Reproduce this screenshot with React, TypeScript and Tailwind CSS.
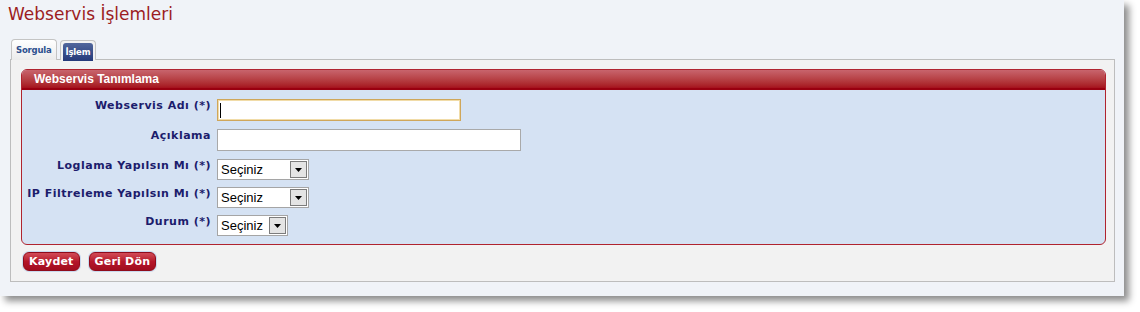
import React from 'react';

const fields = [
  { label: 'Webservis Adı (*)', kind: 'focus', width: 'w-[244px]', height: 'h-[22px]', mb: 'mb-[8px]' },
  { label: 'Açıklama', kind: 'text', width: 'w-[304px]', height: 'h-[22px]', mb: 'mb-[8px]' },
  { label: 'Loglama Yapılsın Mı (*)', kind: 'select', width: 'w-[92px]', height: 'h-[21px]', mb: 'mb-[7px]' },
  { label: 'IP Filtreleme Yapılsın Mı (*)', kind: 'select', width: 'w-[92px]', height: 'h-[21px]', mb: 'mb-[7px]' },
  { label: 'Durum (*)', kind: 'select', width: 'w-[71px]', height: 'h-[21px]', mb: '' },
];

function Select({ width }: { width: string }) {
  return (
    <div className={`${width} h-[21px] flex border border-[#a5a5a5] bg-white`}>
      <span className="flex-1 pl-[3px] text-[13px] leading-[19px] text-black font-['Liberation_Sans',Arial,sans-serif]">
        Seçiniz
      </span>
      <span className="w-[17px] h-[17px] m-[1px] flex items-center justify-center bg-[#e4e4e4] border border-[#7c7c7c]">
        <svg width="8" height="4" viewBox="0 0 8 4">
          <path d="M0 0 H7 L3.5 4 Z" fill="#000" />
        </svg>
      </span>
    </div>
  );
}

function Button({ children }: { children: React.ReactNode }) {
  return (
    <button className="h-[19px] px-[5px] rounded-[6px] bg-gradient-to-b from-[#d24a57] via-[#b5162a] to-[#a10d1f] border border-[#8f0b1b] text-white text-[11px] font-bold leading-[17px] font-['DejaVu_Sans',Verdana,sans-serif] tracking-[0.2px] shadow-[0_0_0_1px_#c9d9ee]">
      {children}
    </button>
  );
}

export default function App() {
  return (
    <div className="w-[1140px] h-[312px] bg-white">
      <div className="w-[1124px] h-[296px] bg-[#f0f3f8] shadow-[5px_5px_7px_rgba(0,0,0,0.45)] pt-[3px]">

        {/* Title */}
        <h1 className="pl-[8px] text-[17px] leading-[22px] text-[#9c1c22] font-['DejaVu_Sans',Tahoma,sans-serif]">
          Webservis İşlemleri
        </h1>

        {/* Tabs */}
        <div className="mt-[14px] pl-[11px] flex items-end gap-[3px] h-[21px] relative z-10">
          <div className="h-[21px] px-[4px] rounded-t-[4px] border border-[#c4c4c4] border-b-0 bg-gradient-to-b from-white to-[#ebebeb] text-[8.5px] font-bold leading-[20px] text-[#2d4f8e] font-['DejaVu_Sans',Tahoma,sans-serif] tracking-[-0.2px]">
            Sorgula
          </div>
          <div className="h-[20px] p-[2px] pb-0 rounded-t-[4px] border border-[#c4c4c4] border-b-0 bg-[#f2f2f2]">
            <div className="h-[18px] px-[3px] rounded-t-[3px] bg-gradient-to-b from-[#51669c] to-[#25397a] text-[8.5px] font-bold leading-[18px] text-white font-['DejaVu_Sans',Tahoma,sans-serif] tracking-[-0.2px]">
              İşlem
            </div>
          </div>
        </div>

        {/* Panel */}
        <div className="ml-[10px] mr-[9px] -mt-px border border-[#bdbdbd] bg-[#f2f2f2] pt-[9px] pl-[10px] pr-[8px] pb-[10px]">
          <div className="rounded-[6px] border border-[#b0242f] bg-[#d5e2f3] overflow-hidden">
            <div className="h-[20px] bg-gradient-to-b from-[#c8646d] to-[#a50f1c] border-b-2 border-[#990010] pl-[12px] text-white text-[12px] font-bold leading-[19px] font-['Liberation_Sans',Arial,sans-serif]">
              Webservis Tanımlama
            </div>
            <div className="pt-[9px] pb-[8px]">
              {fields.map((f, i) => (
                <div key={i} className={`flex ${f.mb}`}>
                  <label className="w-[189px] shrink-0 text-right text-[11px] font-bold leading-[14px] text-[#1c1c6c] font-['DejaVu_Sans',Tahoma,sans-serif] tracking-[0.5px]">
                    {f.label}
                  </label>
                  <div className="ml-[6px]">
                    {f.kind === 'select' ? (
                      <Select width={f.width} />
                    ) : f.kind === 'focus' ? (
                      <div className={`${f.width} ${f.height} border border-[#cfa65a] bg-white shadow-[inset_0_0_0_1px_#f1dca8] flex items-center pl-[2px]`}>
                        <span className="w-px h-[15px] bg-black" />
                      </div>
                    ) : (
                      <div className={`${f.width} ${f.height} border border-[#a9a9a9] bg-white`} />
                    )}
                  </div>
                </div>
              ))}
            </div>
          </div>

          {/* Buttons */}
          <div className="mt-[7px] pl-[2px] flex gap-[9px]">
            <Button>Kaydet</Button>
            <Button>Geri Dön</Button>
          </div>
        </div>
      </div>
    </div>
  );
}
